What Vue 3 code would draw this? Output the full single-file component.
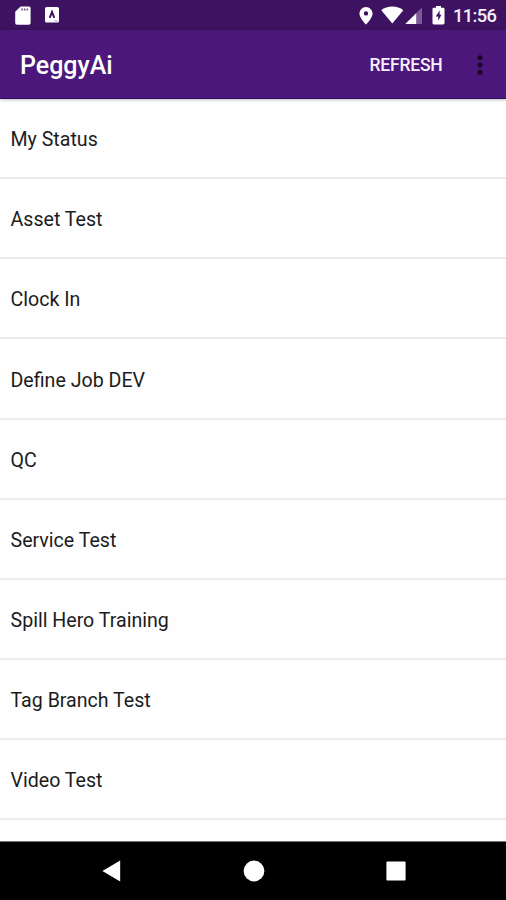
<script setup>
const items = [
  'My Status',
  'Asset Test',
  'Clock In',
  'Define Job DEV',
  'QC',
  'Service Test',
  'Spill Hero Training',
  'Tag Branch Test',
  'Video Test',
]
</script>

<template>
  <div class="screen">
    <div class="status">
      <svg class="sd" width="16" height="19" viewBox="0 0 16 19">
        <path fill="#fff" d="M5.6.4H14a1.6 1.6 0 0 1 1.6 1.6v15a1.8 1.8 0 0 1-1.8 1.8H2A1.8 1.8 0 0 1 .2 17V5.8z" />
        <path stroke="#3d1361" stroke-width="1.4" d="M7 2.6v2M9.6 2.6v2M12.2 2.6v2" opacity=".8" />
      </svg>
      <svg class="keyboard" width="14" height="16" viewBox="0 0 14 16">
        <rect width="14" height="15.6" rx="1.6" fill="#fff" />
        <path fill="none" stroke="#3d1361" stroke-width="1.9" d="M4.7 10.8 7 4.8l2.3 6" />
        <path stroke="#9c86b0" stroke-width=".8" d="M9.5 13.8h3" />
      </svg>
      <span class="grow"></span>
      <svg class="pin" width="14" height="18" viewBox="0 0 14 18">
        <path fill="#fff" fill-rule="evenodd" d="M7 0a6.6 6.6 0 0 0-6.6 6.6C.4 11 7 17.6 7 17.6S13.6 11 13.6 6.6A6.6 6.6 0 0 0 7 0m0 4.2a2.2 2.2 0 1 1 0 4.4 2.2 2.2 0 0 1 0-4.4" />
      </svg>
      <svg class="wifi" width="23" height="18" viewBox="0 0 23 18">
        <path fill="#fff" d="M11.3 17.4.3 4.2C3.4 1.6 7 .4 11.3.4s7.9 1.2 11 3.8z" />
      </svg>
      <svg class="signal" width="17" height="17" viewBox="0 0 17 17">
        <path fill="#7d5b99" d="M17 .4v16.6H.3z" />
        <path fill="#fff" d="M11.2 6.2V17H.3z" />
      </svg>
      <svg class="battery" width="13" height="19" viewBox="0 0 13 19">
        <path fill="#fff" d="M4 0h5v1.8h2.2c.8 0 1.3.5 1.3 1.3v14c0 .8-.5 1.3-1.3 1.3H1.8c-.8 0-1.3-.5-1.3-1.3v-14c0-.8.5-1.3 1.3-1.3H4z" />
        <path fill="#3d1361" d="M7.6 4.6 3.8 10.6h2.4v4.2l3.3-6H7.6z" />
      </svg>
      <span class="time">11:56</span>
    </div>

    <header class="bar">
      <h1 class="title">PeggyAi</h1>
      <button class="refresh">REFRESH</button>
      <svg class="more" width="6" height="20" viewBox="0 0 6 20">
        <circle cx="3" cy="2.7" r="2.5" />
        <circle cx="3" cy="10" r="2.5" />
        <circle cx="3" cy="17.3" r="2.5" />
      </svg>
    </header>

    <ul class="list">
      <li v-for="item in items" :key="item" class="row"><span>{{ item }}</span></li>
    </ul>

    <nav class="nav">
      <svg width="20" height="22" viewBox="0 0 20 22">
        <path fill="#fff" d="M18.2.6v20.8L.4 11z" />
      </svg>
      <svg width="22" height="22" viewBox="0 0 22 22">
        <circle cx="11" cy="11" r="10.4" fill="#fff" />
      </svg>
      <svg width="20" height="20" viewBox="0 0 20 20">
        <rect x=".4" y=".4" width="19.2" height="19.2" rx="1" fill="#fff" />
      </svg>
    </nav>
  </div>
</template>

<style>
body {
  margin: 0;
  background: #fff;
}
</style>

<style scoped>
.screen {
  width: 506px;
  height: 900px;
  display: flex;
  flex-direction: column;
  overflow: hidden;
  background: #fefefe;
  font-family: Roboto, sans-serif;
}
.status {
  flex: none;
  height: 30px;
  box-sizing: border-box;
  padding: 6px 9px 0 15px;
  display: flex;
  align-items: flex-start;
  background: #3d1361;
}
.status svg {
  flex: none;
}
.keyboard {
  margin: 1px 0 0 14px;
}
.grow {
  flex: 1;
}
.pin {
  margin: 1px 8px 0 0;
}
.wifi {
  margin-right: 1px;
}
.signal {
  margin: 1px 10px 0 0;
}
.battery {
  margin-right: 8px;
}
.time {
  width: 44px;
  color: #f4effa;
  font-size: 18.3px;
  font-weight: 500;
  line-height: 20px;
  letter-spacing: -0.6px;
  white-space: nowrap;
}
.bar {
  flex: none;
  position: relative;
  height: 69px;
  box-sizing: border-box;
  padding: 1px 23px 0 20px;
  display: flex;
  align-items: center;
  background: #4b177b;
  border-bottom: 1px solid #2f0b68;
  box-shadow: 0 1px 3px rgba(40, 20, 40, 0.28);
}
.title {
  flex: 1;
  margin: 2px 0 0;
  color: #fff;
  font-size: 25px;
  font-weight: 500;
  line-height: 30px;
}
.refresh {
  margin: 1px 34.5px 0 0;
  padding: 0;
  border: 0;
  background: none;
  color: #f6f0fb;
  font-family: inherit;
  font-size: 17.5px;
  font-weight: 500;
  line-height: 22px;
  letter-spacing: -0.2px;
}
.more {
  flex: none;
  fill: #180525;
}
.list {
  flex: 1;
  min-height: 0;
  margin: 0;
  padding: 0;
  list-style: none;
  overflow: hidden;
}
.row {
  height: 80.17px;
  box-sizing: border-box;
  padding: 4px 10.5px 0;
  display: flex;
  align-items: center;
  border-bottom: 2px solid #ebebeb;
  color: #1c1c1c;
  font-size: 19.6px;
  line-height: 24px;
}
.nav {
  flex: none;
  height: 59px;
  box-sizing: border-box;
  padding: 0 100px 0 101.5px;
  display: flex;
  align-items: center;
  justify-content: space-between;
  background: #000;
  border-top: 1px solid #777;
}
</style>
